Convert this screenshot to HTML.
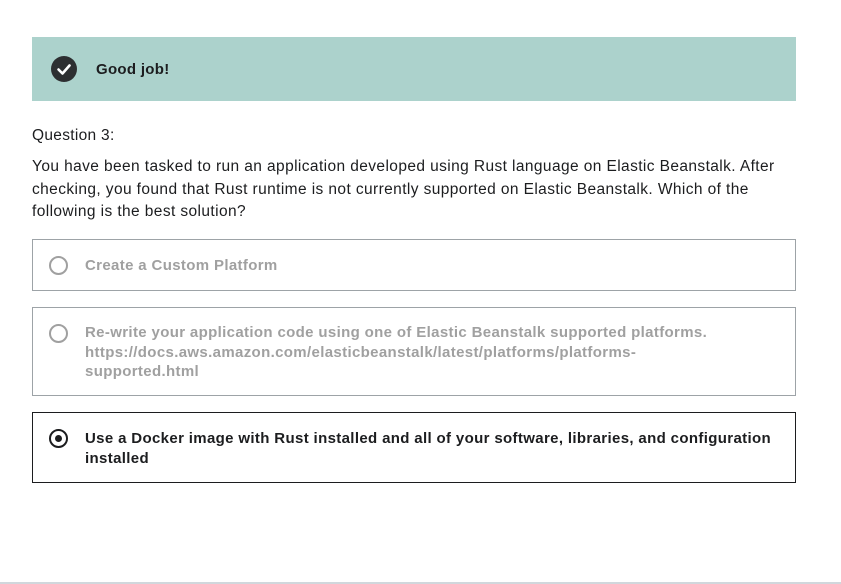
<!DOCTYPE html>
<html><head><style>
body{margin:0;width:841px;height:584px;background:#fff;font-family:"Liberation Sans",sans-serif;color:#1c1d1f;position:relative;overflow:hidden}
.banner{position:absolute;left:32px;top:37px;width:764px;height:64px;background:#acd2cc}
.chk{position:absolute;left:51px;top:56px;width:26px;height:26px;border-radius:50%;background:#2d2f31}
.gj{position:absolute;left:96px;top:61px;font-weight:bold;font-size:15px;letter-spacing:0.3px}
.q{position:absolute;left:32px;top:127px;font-size:15.5px;letter-spacing:0.3px}
.p{position:absolute;left:32px;top:156px;width:800px;font-size:15.5px;letter-spacing:0.4px;line-height:22.5px;white-space:nowrap}
.opt{position:absolute;left:32px;width:762px;border:1px solid #9da3a7;box-sizing:content-box}
.opt .t{position:absolute;left:52px;font-weight:bold;font-size:15px;letter-spacing:0.35px;line-height:19.5px;color:#a0a0a0;width:720px;white-space:nowrap}
.r{position:absolute;left:16px;width:15px;height:15px;border:2px solid #a0a0a0;border-radius:50%}
.sel{border-color:#1c1d1f}
.sel .t{color:#1c1d1f}
.sel .r{border-color:#1c1d1f}
.sel .r:after{content:"";position:absolute;left:4px;top:4px;width:7px;height:7px;border-radius:50%;background:#1c1d1f}
.bl{position:absolute;left:0;top:582px;width:841px;height:2px;background:#d1d7dc}
</style></head><body>
<div class="banner"></div>
<div class="chk"><svg width="26" height="26"><path d="M7.5 13.5l4 4 7-8" stroke="#fff" stroke-width="2.6" fill="none" stroke-linecap="round" stroke-linejoin="round"/></svg></div>
<div class="gj">Good job!</div>
<div class="q">Question 3:</div>
<div class="p">You have been tasked to run an application developed using Rust language on Elastic Beanstalk. After<br>checking, you found that Rust runtime is not currently supported on Elastic Beanstalk. Which of the<br>following is the best solution?</div>
<div class="opt" style="top:239px;height:50px"><div class="r" style="top:16px"></div><div class="t" style="top:16px">Create a Custom Platform</div></div>
<div class="opt" style="top:307px;height:87px"><div class="r" style="top:16px"></div><div class="t" style="top:15px">Re-write your application code using one of Elastic Beanstalk supported platforms.<br>https://docs.aws.amazon.com/elasticbeanstalk/latest/platforms/platforms-<br>supported.html</div></div>
<div class="opt sel" style="top:412px;height:69px"><div class="r" style="top:16px"></div><div class="t" style="top:16px">Use a Docker image with Rust installed and all of your software, libraries, and configuration<br>installed</div></div>
<div class="bl"></div>
</body></html>
